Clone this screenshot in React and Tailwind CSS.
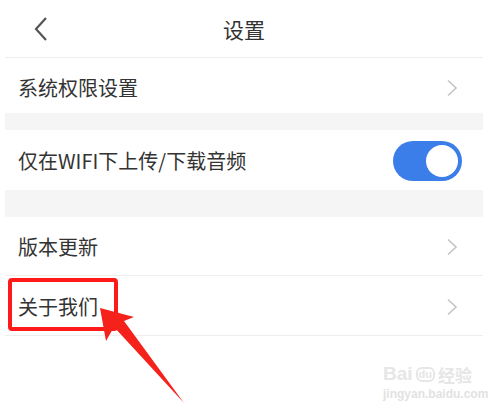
import React from 'react'

const FONT = { fontFamily: '"Noto Sans CJK SC", "Noto Sans", sans-serif' }

function Chevron() {
  return (
    <svg width="12" height="18" viewBox="0 0 12 18" className="shrink-0">
      <path d="M2 1.5 L10 9 L2 16.5" fill="none" stroke="#c4c4c4" strokeWidth="1.6" />
    </svg>
  )
}

function Row({ label, h, right, border }) {
  return (
    <div className={`flex items-center justify-between pl-[13px] pr-[25px] ${h} ${border ? 'border-b border-[#eeeeee]' : ''}`}>
      <span className="text-[20px] text-[#333333] leading-none">{label}</span>
      {right || <Chevron />}
    </div>
  )
}

function Toggle() {
  return (
    <div className="w-[69px] h-[40px] rounded-full bg-[#3b7ee9] flex items-center justify-end pr-[4px] mr-[-4px]">
      <div className="w-[32px] h-[32px] rounded-full bg-white" />
    </div>
  )
}

export default function App() {
  return (
    <div className="relative w-[500px] h-[412px] bg-white overflow-hidden" style={FONT}>
      <div className="ml-[5px] w-[478px]">
        <div className="h-[58px] border-b border-[#eeeeee] flex items-center relative">
          <svg width="16" height="26" viewBox="0 0 16 26" className="absolute left-[28px] top-[16px]">
            <path d="M13 2 L3 13 L13 24" fill="none" stroke="#555555" strokeWidth="2.2" />
          </svg>
          <div className="flex-1 text-center text-[21px] text-[#333333] pt-[2px]">设置</div>
        </div>
        <Row label="系统权限设置" h="h-[55px] pt-[5px]" />
        <div className="h-[17px] bg-[#f5f5f5]" />
        <Row label="仅在WIFI下上传/下载音频" h="h-[60px] pt-[2px]" right={<Toggle />} />
        <div className="h-[27px] bg-[#f5f5f5]" />
        <Row label="版本更新" h="h-[59px] pt-[2px]" border />
        <Row label="关于我们" h="h-[60px] pt-[2px]" border />
      </div>

      <div className="absolute left-[8px] top-[278px] w-[110px] h-[53px] border-[4px] border-[#ff1a1a] rounded-[4px]" />

      <svg className="absolute left-0 top-0" width="500" height="412" viewBox="0 0 500 412">
        <polygon points="100,308 134,317 124,321 184,403 114,327 106,341" fill="#f5221b" />
      </svg>

      <div className="absolute left-[383px] top-[364px] flex items-end gap-[3px] text-[#e6e6e6] leading-none">
        <span className="text-[19px] font-bold" style={{ fontFamily: '"Liberation Sans", sans-serif' }}>Bai</span>
        <span className="text-[11px] font-bold border-[2px] border-[#e6e6e6] rounded-[6px] px-[1px] mb-[1px]" style={{ fontFamily: '"Liberation Sans", sans-serif' }}>du</span>
        <span className="text-[17px] font-bold">经验</span>
      </div>
      <div className="absolute left-[383px] top-[388px] text-[12px] text-[#e2e2e2] font-bold leading-none whitespace-nowrap" style={{ fontFamily: '"Liberation Sans", sans-serif' }}>jingyan.baidu.com</div>
    </div>
  )
}
